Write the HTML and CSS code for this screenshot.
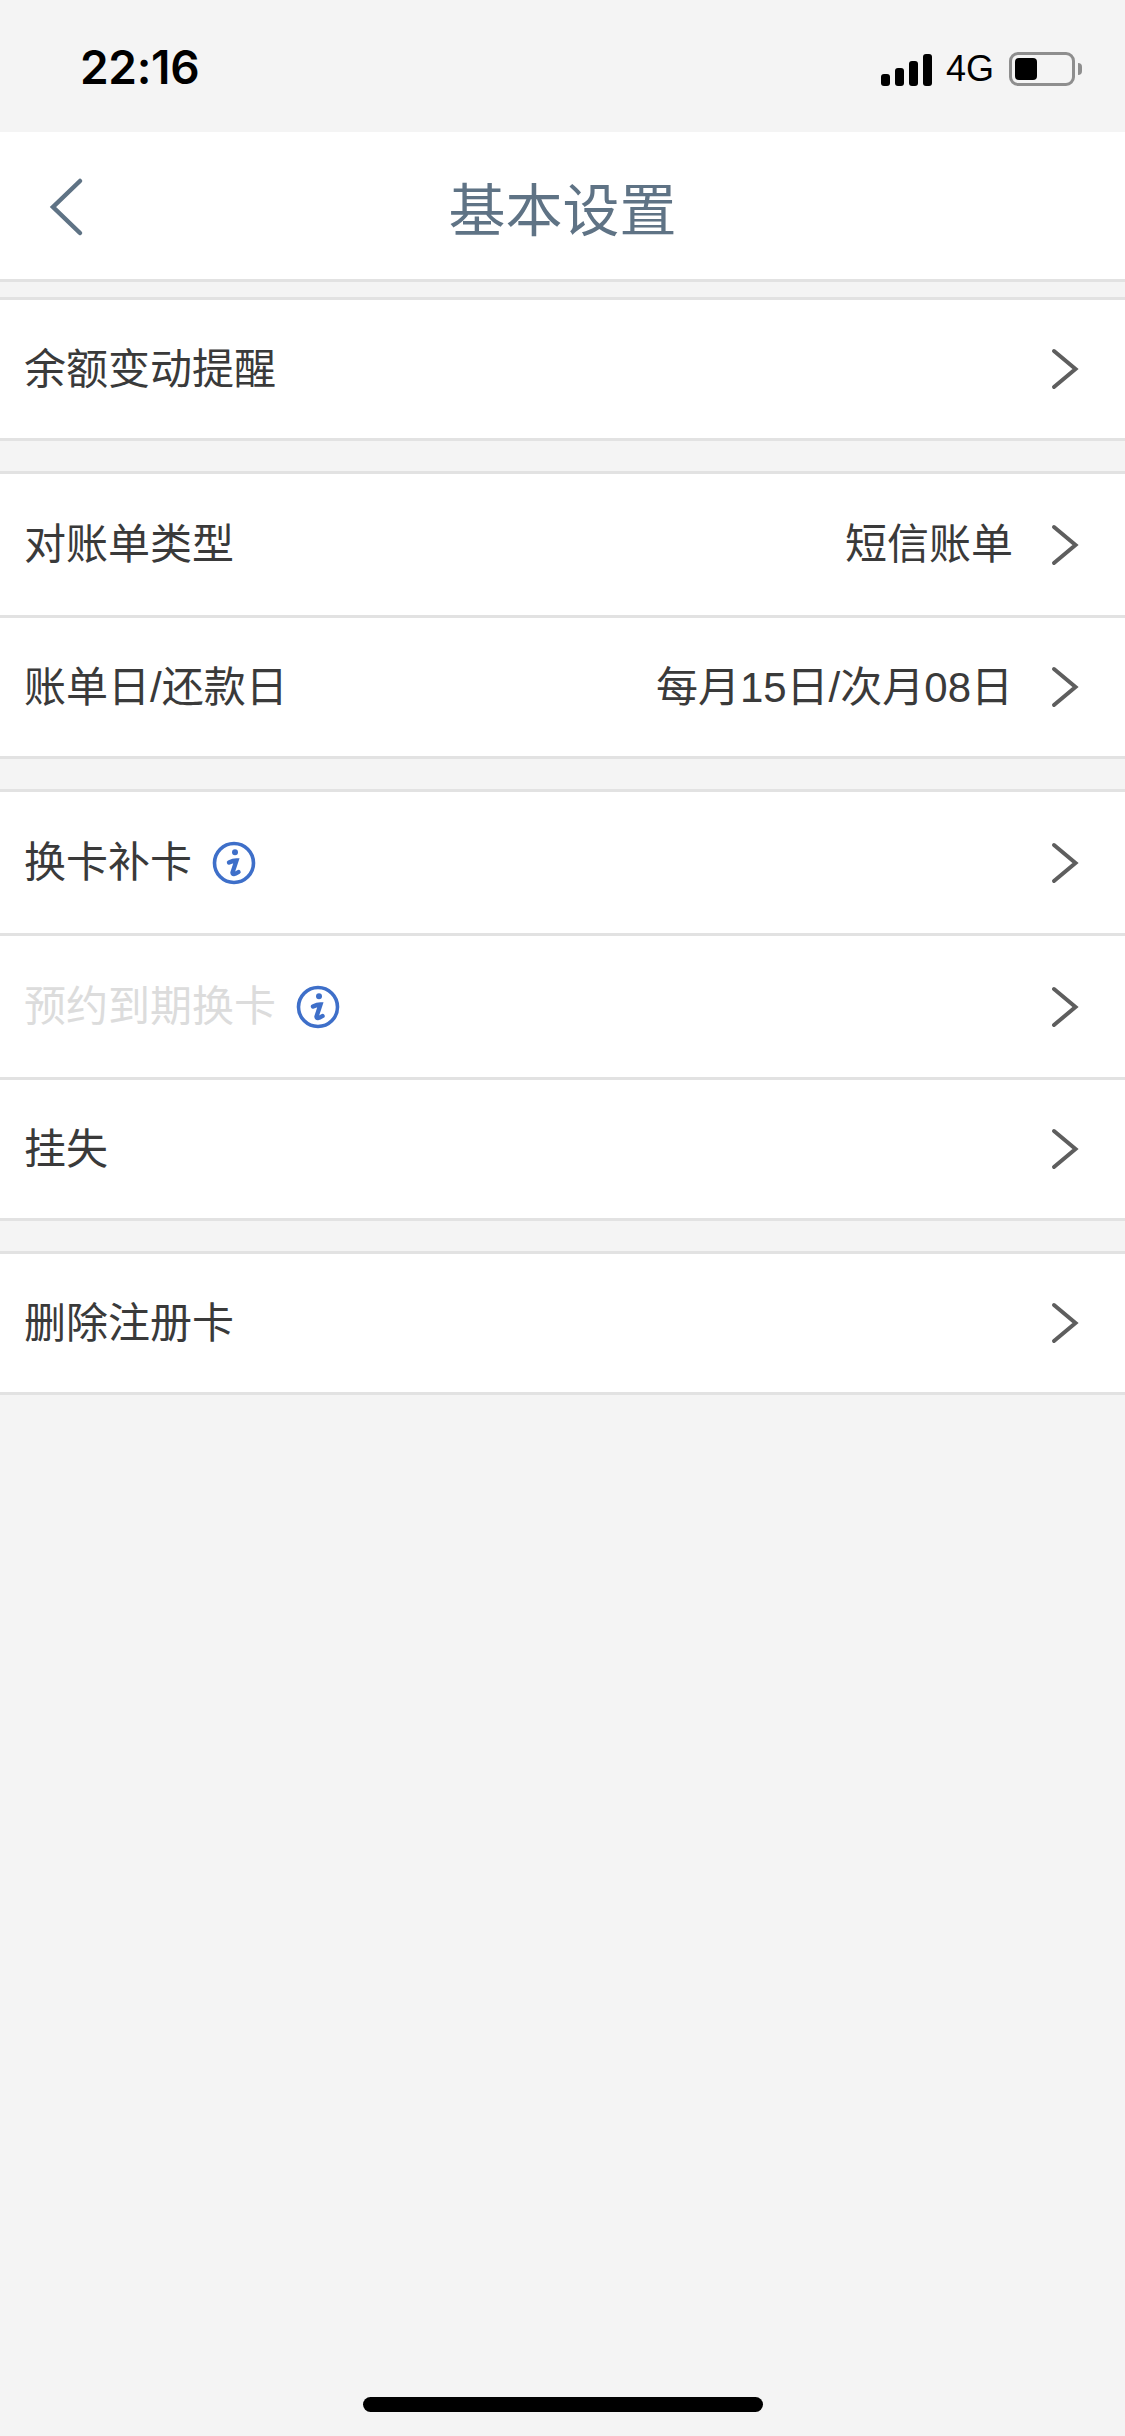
FILE: index.html
```html
<!DOCTYPE html>
<html lang="zh-CN">
<head>
<meta charset="utf-8">
<title>基本设置</title>
<link rel="stylesheet" href="styles.css">
</head>
<body>
<div class="screen">
  <div class="status">
    <span class="time">22:16</span>
    <div class="status-right">
      <div class="signal"><i class="b1"></i><i class="b2"></i><i class="b3"></i><i class="b4"></i></div>
      <span class="net">4G</span>
      <div class="battery"><div class="battery-body"><div class="battery-fill"></div></div><div class="battery-cap"></div></div>
    </div>
  </div>
  <header class="nav">
    <svg class="back" width="44" height="64" viewBox="0 0 44 64"><path d="M37 6 L10 32 L37 58" fill="none" stroke="#5f7385" stroke-width="4.5" stroke-linecap="round" stroke-linejoin="miter"/></svg>
    <h1 class="title">基本设置</h1>
  </header>

  <section class="group">
    <div class="row"><span class="label">余额变动提醒</span><svg class="chev" width="30" height="44" viewBox="0 0 30 44"><path d="M4 4 L25.5 22 L4 40" fill="none" stroke="#5e5e5e" stroke-width="4" stroke-linecap="round"/></svg></div>
  </section>

  <section class="group">
    <div class="row"><span class="label">对账单类型</span><span class="value">短信账单</span><svg class="chev" width="30" height="44" viewBox="0 0 30 44"><path d="M4 4 L25.5 22 L4 40" fill="none" stroke="#5e5e5e" stroke-width="4" stroke-linecap="round"/></svg></div>
    <div class="row"><span class="label">账单日/还款日</span><span class="value">每月15日/次月08日</span><svg class="chev" width="30" height="44" viewBox="0 0 30 44"><path d="M4 4 L25.5 22 L4 40" fill="none" stroke="#5e5e5e" stroke-width="4" stroke-linecap="round"/></svg></div>
  </section>

  <section class="group">
    <div class="row"><span class="label">换卡补卡</span>
      <svg class="info" width="44" height="44" viewBox="0 0 44 44"><circle cx="22" cy="22" r="19.5" fill="none" stroke="#3e6fc9" stroke-width="3.6"/><circle cx="23" cy="11.3" r="3" fill="#3e6fc9"/><path d="M17 21.5 Q21 19.5 24.5 19.5 L20.5 31.5 Q20.5 35 26.5 31" fill="none" stroke="#3e6fc9" stroke-width="4.4" stroke-linecap="round"/></svg>
      <svg class="chev" width="30" height="44" viewBox="0 0 30 44"><path d="M4 4 L25.5 22 L4 40" fill="none" stroke="#5e5e5e" stroke-width="4" stroke-linecap="round"/></svg></div>
    <div class="row"><span class="label disabled">预约到期换卡</span>
      <svg class="info" width="44" height="44" viewBox="0 0 44 44"><circle cx="22" cy="22" r="19.5" fill="none" stroke="#3e6fc9" stroke-width="3.6"/><circle cx="23" cy="11.3" r="3" fill="#3e6fc9"/><path d="M17 21.5 Q21 19.5 24.5 19.5 L20.5 31.5 Q20.5 35 26.5 31" fill="none" stroke="#3e6fc9" stroke-width="4.4" stroke-linecap="round"/></svg>
      <svg class="chev" width="30" height="44" viewBox="0 0 30 44"><path d="M4 4 L25.5 22 L4 40" fill="none" stroke="#5e5e5e" stroke-width="4" stroke-linecap="round"/></svg></div>
    <div class="row"><span class="label">挂失</span><svg class="chev" width="30" height="44" viewBox="0 0 30 44"><path d="M4 4 L25.5 22 L4 40" fill="none" stroke="#5e5e5e" stroke-width="4" stroke-linecap="round"/></svg></div>
  </section>

  <section class="group">
    <div class="row"><span class="label">删除注册卡</span><svg class="chev" width="30" height="44" viewBox="0 0 30 44"><path d="M4 4 L25.5 22 L4 40" fill="none" stroke="#5e5e5e" stroke-width="4" stroke-linecap="round"/></svg></div>
  </section>

  <div class="spacer"></div>
  <div class="home-wrap"><div class="home"></div></div>
</div>
</body>
</html>
```
FILE: styles.css
```css
* { box-sizing: border-box; margin: 0; padding: 0; }
html, body { width: 1125px; height: 2436px; overflow: hidden; }
body { background: #f4f4f4; font-family: "Liberation Sans", "Noto Sans CJK SC", sans-serif; }
.screen { width: 1125px; height: 2436px; display: flex; flex-direction: column; background: #f4f4f4; }

.status { height: 132px; display: flex; align-items: flex-start; justify-content: space-between; padding: 40px 43px 0 80px; }
.time { font-family: Inter, "Liberation Sans", sans-serif; font-weight: 600; font-size: 46px; line-height: 54px; color: #000; letter-spacing: -0.3px; }
.status-right { display: flex; align-items: center; height: 40px; margin-top: 9px; }
.signal { display: flex; align-items: flex-end; gap: 5px; height: 33px; }
.signal i { display: block; width: 9px; border-radius: 3px; background: #000; }
.b1 { height: 12px; }
.b2 { height: 18px; }
.b3 { height: 25px; }
.b4 { height: 32px; }
.net { font-family: "Liberation Sans", Arial, sans-serif; font-size: 36px; line-height: 40px; color: #000; margin-left: 14px; }
.battery { display: flex; align-items: center; margin-left: 15px; }
.battery-body { width: 66px; height: 34px; border: 3px solid #8e8e8e; border-radius: 9px; padding: 3px; }
.battery-fill { width: 22px; height: 100%; background: #000; border-radius: 4px; }
.battery-cap { width: 4px; height: 12px; background: #8e8e8e; border-radius: 0 4px 4px 0; margin-left: 3px; }

.nav { height: 150px; position: relative; display: flex; align-items: center; justify-content: center; background: #fff; border-bottom: 3px solid #e2e2e2; }
.back { position: absolute; left: 43px; top: 43px; }
.title { font-family: "Noto Sans CJK SC", sans-serif; font-size: 57px; line-height: 80px; font-weight: 400; color: #5f7385; margin-top: 1px; }

.group { margin-top: 30px; background: #fff; border-top: 3px solid #e2e2e2; border-bottom: 3px solid #e2e2e2; }
.nav + .group { margin-top: 15px; }
.row { height: 144px; display: flex; align-items: center; padding: 0 45px 0 24px; border-bottom: 3px solid #e2e2e2; }
.row:last-child { height: 138px; border-bottom: 0; }
.label { font-size: 42px; line-height: 60px; color: #3a3a3a; margin-top: 1px; }
.label.disabled { color: #dcdcdc; }
.value { margin-left: auto; margin-right: 37px; font-size: 42px; line-height: 60px; color: #3a3a3a; margin-top: 1px; }
.info { margin-left: 20px; }
.chev { margin-left: auto; }
.value + .chev { margin-left: 0; }

.spacer { flex: 1; }
.home-wrap { height: 39px; display: flex; justify-content: center; }
.home { width: 400px; height: 15px; background: #000; border-radius: 8px; }
```
